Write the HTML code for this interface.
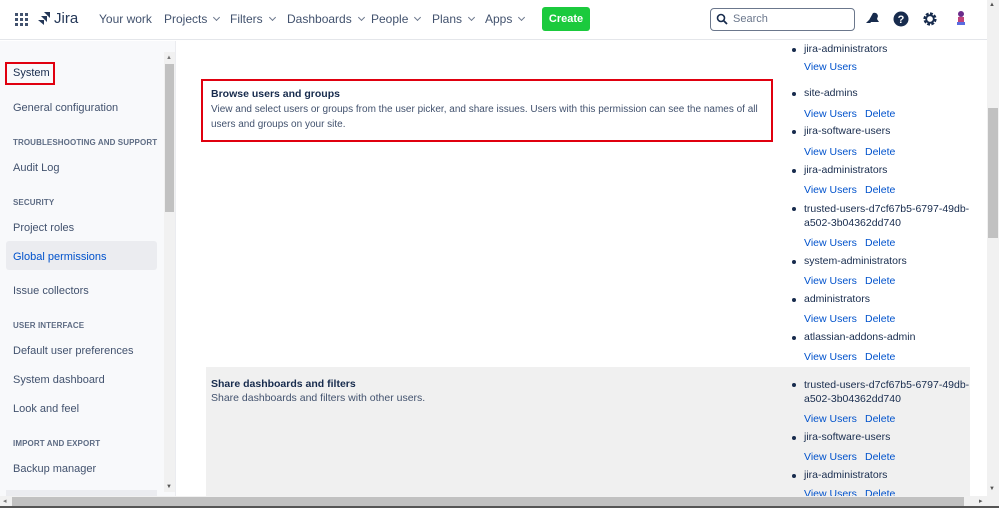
<!DOCTYPE html>
<html><head><style>
*{margin:0;padding:0;box-sizing:border-box}
body{width:999px;height:508px;overflow:hidden;background:#fff;font-family:"Liberation Sans",sans-serif;color:#172b4d;position:relative}
.a{position:absolute;white-space:nowrap}
.nav{font-size:12px;color:#42526e;top:12px}
.nav i{display:inline-block;width:5px;height:5px;border-right:1.2px solid #6b778c;border-bottom:1.2px solid #6b778c;transform:rotate(45deg);margin-left:7px;position:relative;top:-3px}
.side{font-size:11px;color:#42526e}
.hd{font-size:8px;font-weight:bold;color:#5e6c84;letter-spacing:.1px}
.it{font-size:10.5px;color:#172b4d;left:804px}
.lk{font-size:10.5px;color:#0052cc;}
.b{position:absolute;left:792px;width:4px;height:4px;border-radius:50%;background:#172b4d}
</style></head><body>
<div class="a" style="left:0;top:0;width:999px;height:40px;border-bottom:1px solid #e4e6ea;background:#fff"></div>
<svg class="a" style="left:15px;top:13px" width="13" height="13"><g fill="#42526e"><rect x="0" y="0" width="3" height="3"/><rect x="5" y="0" width="3" height="3"/><rect x="10" y="0" width="3" height="3"/><rect x="0" y="5" width="3" height="3"/><rect x="5" y="5" width="3" height="3"/><rect x="10" y="5" width="3" height="3"/><rect x="0" y="10" width="3" height="3"/><rect x="5" y="10" width="3" height="3"/><rect x="10" y="10" width="3" height="3"/></g></svg>
<svg class="a" style="left:37px;top:11px" width="14" height="15"><path d="M7 1h6v6zM4 5h6v6zM1 9h6v5z" fill="#253858"/></svg>
<div class="a" style="left:54px;top:10px;font-size:15px;color:#253858">Jira</div>
<div class="a nav" style="left:99px">Your work</div>
<div class="a nav" style="left:164px">Projects<i></i></div>
<div class="a nav" style="left:230px">Filters<i></i></div>
<div class="a nav" style="left:287px">Dashboards<i></i></div>
<div class="a nav" style="left:371px">People<i></i></div>
<div class="a nav" style="left:432px">Plans<i></i></div>
<div class="a nav" style="left:485px">Apps<i></i></div>
<div class="a" style="left:542px;top:7px;width:48px;height:24px;background:#1bca3d;border-radius:3px;color:#fff;font-size:11px;font-weight:bold;text-align:center;line-height:24px">Create</div>
<div class="a" style="left:710px;top:8px;width:145px;height:23px;border:1.5px solid #6b778c;border-radius:4px"></div>
<svg class="a" style="left:716px;top:13px" width="12" height="12"><circle cx="5" cy="5" r="3.5" stroke="#172b4d" stroke-width="1.6" fill="none"/><path d="M7.5 7.5L11 11" stroke="#172b4d" stroke-width="1.8"/></svg>
<div class="a" style="left:733px;top:13px;font-size:11px;color:#6b778c">Search</div>
<svg class="a" style="left:865px;top:11px" width="15" height="15"><path d="M3 11 L8 2 Q12 1 13 5 L12 8 L14 11 Z" fill="#172b4d"/><path d="M1 12 L4 9 L6 12Z" fill="#172b4d"/></svg>
<svg class="a" style="left:893px;top:11px" width="16" height="16"><circle cx="8" cy="8" r="7.5" fill="#172b4d"/><text x="8" y="12" font-size="11" font-weight="bold" fill="#fff" text-anchor="middle" font-family="Liberation Sans">?</text></svg>
<svg class="a" style="left:922px;top:11px" width="16" height="16"><circle cx="8" cy="8" r="5" fill="none" stroke="#172b4d" stroke-width="3.2" stroke-dasharray="2.6 1.3"/><circle cx="8" cy="8" r="3.8" fill="none" stroke="#172b4d" stroke-width="1.8"/></svg>
<svg class="a" style="left:954px;top:10px" width="14" height="17"><circle cx="7" cy="4" r="3" fill="#6a2b8a"/><rect x="4" y="7" width="6" height="6" fill="#c0427a"/><rect x="3" y="12" width="8" height="3" fill="#5a6be0"/></svg>
<div class="a" style="left:0;top:41px;width:176px;height:455px;background:#f8f9fb;border-right:1px solid #ebecf0"></div>
<div class="a" style="left:5px;top:62px;width:50px;height:23px;border:2px solid #e0000f"></div>
<div class="a side" style="left:13px;top:67px;color:#172b4d">System</div>
<div class="a side" style="left:13px;top:102px">General configuration</div>
<div class="a hd" style="left:13px;top:138px">TROUBLESHOOTING AND SUPPORT</div>
<div class="a side" style="left:13px;top:162px">Audit Log</div>
<div class="a hd" style="left:13px;top:198px">SECURITY</div>
<div class="a side" style="left:13px;top:222px">Project roles</div>
<div class="a" style="left:6px;top:241px;width:151px;height:29px;background:#ebecf0;border-radius:3px"></div>
<div class="a side" style="left:13px;top:251px;color:#0052cc">Global permissions</div>
<div class="a side" style="left:13px;top:285px">Issue collectors</div>
<div class="a hd" style="left:13px;top:321px">USER INTERFACE</div>
<div class="a side" style="left:13px;top:345px">Default user preferences</div>
<div class="a side" style="left:13px;top:374px">System dashboard</div>
<div class="a side" style="left:13px;top:403px">Look and feel</div>
<div class="a hd" style="left:13px;top:439px">IMPORT AND EXPORT</div>
<div class="a side" style="left:13px;top:463px">Backup manager</div>
<div class="a" style="left:6px;top:490px;width:151px;height:6px;background:#ebecf0"></div>
<div class="a" style="left:164px;top:52px;width:11px;height:440px;background:#f1f1f1"></div>
<div class="a" style="left:165px;top:64px;width:9px;height:148px;background:#c1c1c1"></div>
<div class="a" style="left:166px;top:55px;font-size:6px;color:#777">▲</div>
<div class="a" style="left:166px;top:484px;font-size:6px;color:#555">▼</div>
<div class="a" style="left:201px;top:79px;width:572px;height:63px;border:2px solid #e0000f"></div>
<div class="a" style="left:211px;top:88px;font-size:10.5px;font-weight:bold;color:#172b4d">Browse users and groups</div>
<div class="a" style="left:211px;top:102px;font-size:10px;color:#42526e;line-height:15px;white-space:normal;width:560px">View and select users or groups from the user picker, and share issues. Users with this permission can see the names of all users and groups on your site.</div>
<div class="a" style="left:206px;top:367px;width:764px;height:130px;background:#f0f0f0"></div>
<div class="a" style="left:211px;top:378px;font-size:10.5px;font-weight:bold;color:#172b4d">Share dashboards and filters</div>
<div class="a" style="left:211px;top:392px;font-size:10.5px;color:#42526e">Share dashboards and filters with other users.</div>

<div class="b" style="top:48px"></div><div class="a it" style="top:43px">jira-administrators</div>
<div class="a lk" style="left:804px;top:61px">View Users</div>
<div class="b" style="top:92px"></div><div class="a it" style="top:87px">site-admins</div>
<div class="a lk" style="left:804px;top:108px">View Users</div><div class="a lk" style="left:865px;top:108px">Delete</div>
<div class="b" style="top:130px"></div><div class="a it" style="top:125px">jira-software-users</div>
<div class="a lk" style="left:804px;top:146px">View Users</div><div class="a lk" style="left:865px;top:146px">Delete</div>
<div class="b" style="top:169px"></div><div class="a it" style="top:164px">jira-administrators</div>
<div class="a lk" style="left:804px;top:184px">View Users</div><div class="a lk" style="left:865px;top:184px">Delete</div>
<div class="b" style="top:207px"></div><div class="a it" style="top:202px;line-height:14px">trusted-users-d7cf67b5-6797-49db-<br>a502-3b04362dd740</div>
<div class="a lk" style="left:804px;top:237px">View Users</div><div class="a lk" style="left:865px;top:237px">Delete</div>
<div class="b" style="top:260px"></div><div class="a it" style="top:255px">system-administrators</div>
<div class="a lk" style="left:804px;top:275px">View Users</div><div class="a lk" style="left:865px;top:275px">Delete</div>
<div class="b" style="top:298px"></div><div class="a it" style="top:293px">administrators</div>
<div class="a lk" style="left:804px;top:313px">View Users</div><div class="a lk" style="left:865px;top:313px">Delete</div>
<div class="b" style="top:336px"></div><div class="a it" style="top:331px">atlassian-addons-admin</div>
<div class="a lk" style="left:804px;top:351px">View Users</div><div class="a lk" style="left:865px;top:351px">Delete</div>
<div class="b" style="top:383px"></div><div class="a it" style="top:378px;line-height:14px">trusted-users-d7cf67b5-6797-49db-<br>a502-3b04362dd740</div>
<div class="a lk" style="left:804px;top:413px">View Users</div><div class="a lk" style="left:865px;top:413px">Delete</div>
<div class="b" style="top:436px"></div><div class="a it" style="top:431px">jira-software-users</div>
<div class="a lk" style="left:804px;top:451px">View Users</div><div class="a lk" style="left:865px;top:451px">Delete</div>
<div class="b" style="top:474px"></div><div class="a it" style="top:469px">jira-administrators</div>
<div class="a lk" style="left:804px;top:488px">View Users</div><div class="a lk" style="left:865px;top:488px">Delete</div>
<div class="a" style="left:987px;top:0;width:12px;height:496px;background:#f1f1f1"></div>
<div class="a" style="left:988px;top:108px;width:10px;height:130px;background:#c1c1c1"></div>
<div class="a" style="left:989px;top:2px;font-size:6px;color:#555">▲</div>
<div class="a" style="left:989px;top:486px;font-size:6px;color:#555">▼</div>
<div class="a" style="left:0;top:496px;width:999px;height:12px;background:#f1f1f1"></div>
<div class="a" style="left:12px;top:497px;width:952px;height:10px;background:#c1c1c1"></div>
<div class="a" style="left:3px;top:497px;font-size:7px;color:#777">◂</div>
<div class="a" style="left:979px;top:497px;font-size:7px;color:#555">▸</div>
<div class="a" style="left:0;top:506px;width:999px;height:2px;background:#555"></div>
</body></html>
